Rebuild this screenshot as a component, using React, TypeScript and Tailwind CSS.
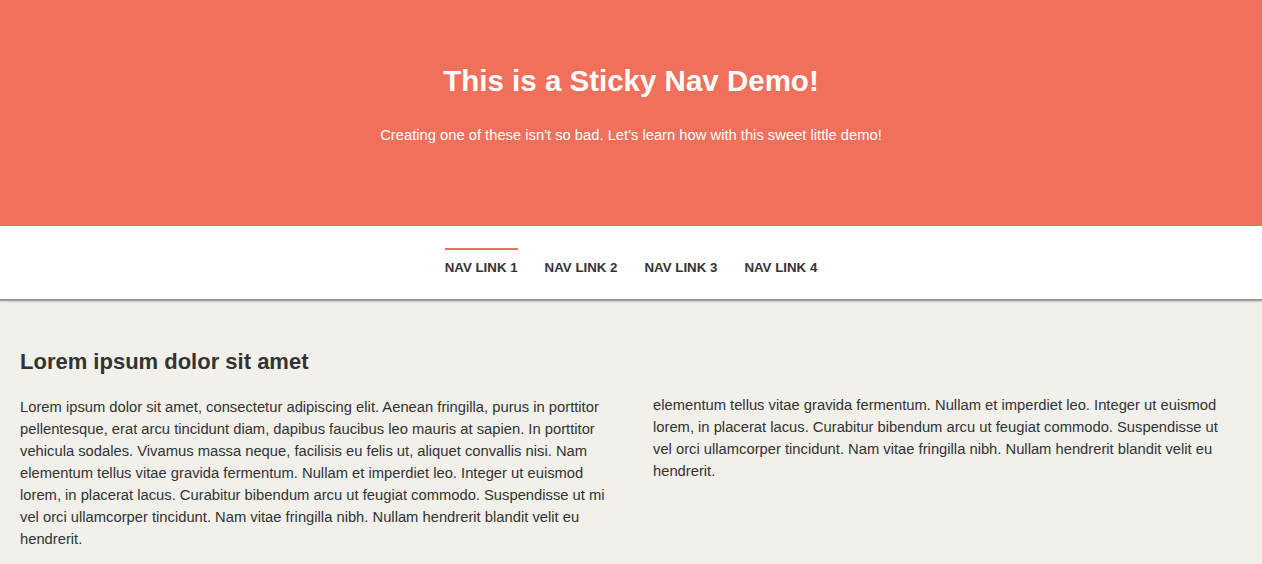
import React from 'react';

const links = ['Nav Link 1', 'Nav Link 2', 'Nav Link 3', 'Nav Link 4'];

const App: React.FC = () => {
  return (
    <div className="min-h-screen bg-[#f1f0ea] font-['Liberation_Sans',Arial,sans-serif] text-[#333]">
      {/* Header */}
      <header className="h-[226px] bg-[#f0705b] text-white text-center pt-[63px]">
        <h1 className="text-[29.5px] leading-[36px] font-bold">This is a Sticky Nav Demo!</h1>
        <p className="mt-[27px] text-[14.75px] leading-[18px]">
          Creating one of these isn't so bad. Let's learn how with this sweet little demo!
        </p>
      </header>

      {/* Nav */}
      <nav className="bg-white h-[75px] border-b-2 border-[#9a9a9a] shadow-[0_1px_2px_rgba(0,0,0,0.15)]">
        <ul className="flex justify-center gap-[27px] pt-[22px]">
          {links.map((link, i) => (
            <li key={link}>
              <a
                href="#"
                className={`block pt-[10px] border-t-2 text-[13.3px] leading-[16px] font-bold uppercase text-[#333] ${
                  i === 0 ? 'border-[#f0705b]' : 'border-transparent'
                }`}
              >
                {link}
              </a>
            </li>
          ))}
        </ul>
      </nav>

      {/* Content */}
      <main className="flex gap-[33px] px-[20px] pt-[48px]">
        <div className="w-[600px]">
          <h2 className="text-[22px] leading-[26px] font-bold">Lorem ipsum dolor sit amet</h2>
          <p className="mt-[21px] text-[14.75px] leading-[22px]">
            Lorem ipsum dolor sit amet, consectetur adipiscing elit. Aenean fringilla, purus in porttitor
            pellentesque, erat arcu tincidunt diam, dapibus faucibus leo mauris at sapien. In porttitor
            vehicula sodales. Vivamus massa neque, facilisis eu felis ut, aliquet convallis nisi. Nam
            elementum tellus vitae gravida fermentum. Nullam et imperdiet leo. Integer ut euismod lorem, in
            placerat lacus. Curabitur bibendum arcu ut feugiat commodo. Suspendisse ut mi vel orci
            ullamcorper tincidunt. Nam vitae fringilla nibh. Nullam hendrerit blandit velit eu hendrerit.
          </p>
        </div>
        <div className="w-[584px] pt-[45px]">
          <p className="text-[14.75px] leading-[22px]">
            elementum tellus vitae gravida fermentum. Nullam et imperdiet leo. Integer ut euismod lorem, in
            placerat lacus. Curabitur bibendum arcu ut feugiat commodo. Suspendisse ut vel orci ullamcorper
            tincidunt. Nam vitae fringilla nibh. Nullam hendrerit blandit velit eu hendrerit.
          </p>
        </div>
      </main>
    </div>
  );
};

export default App;
